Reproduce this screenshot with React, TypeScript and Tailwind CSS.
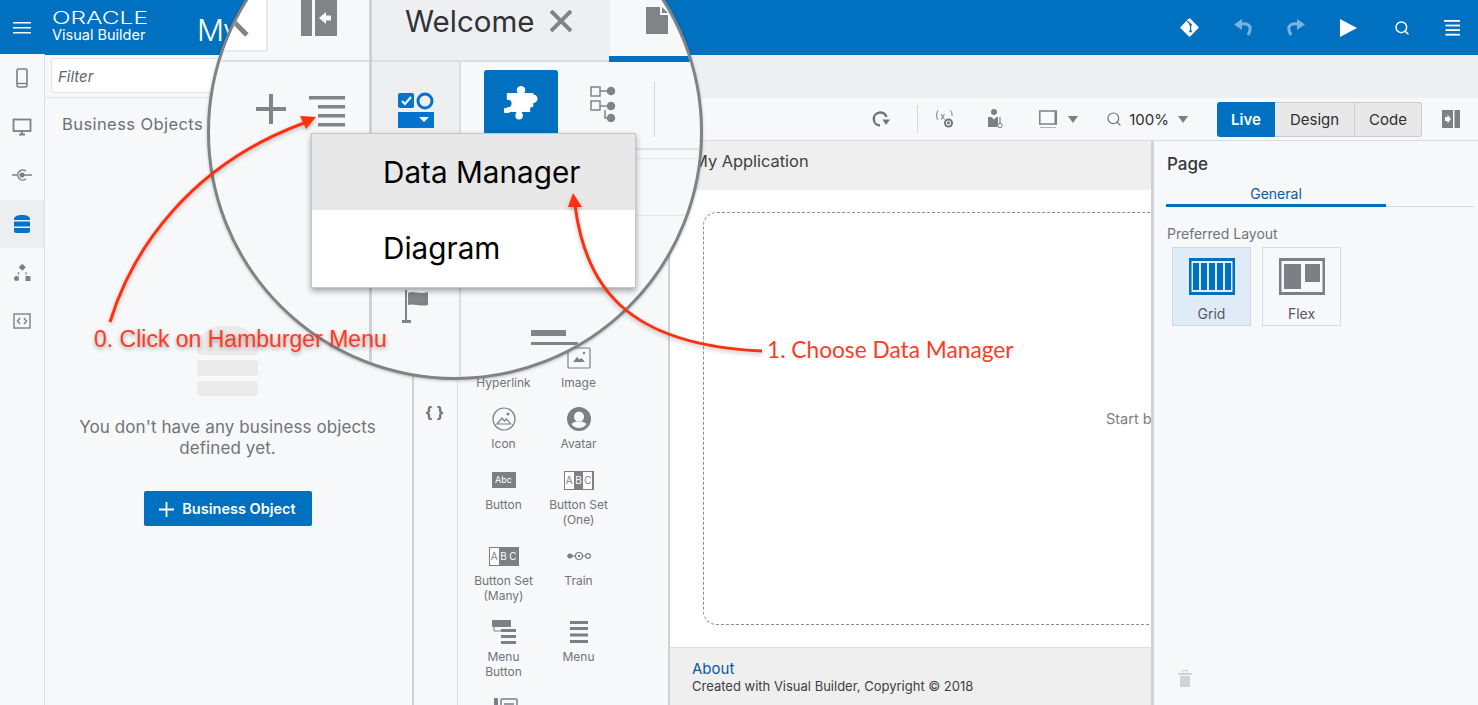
import { Search } from "lucide-react"
import type { ReactNode } from "react"

function RailIcon({ active, children }: { active?: boolean; children: ReactNode }) {
  return (
    <div className={`h-[48.6px] flex items-center justify-center text-[#7b8085] ${active ? "bg-[#eceef0]" : ""}`}>
      {children}
    </div>
  )
}

function SideRail() {
  return (
    <div className="w-[45px] shrink-0 border-r border-[#d6e0ea] bg-[#f7f8fa] -mt-px">
      <RailIcon>
        <svg width="12" height="20" viewBox="0 0 12 20" fill="none" stroke="currentColor" strokeWidth="1.6">
          <rect x="1" y="1" width="10" height="18" rx="1.5" />
          <path d="M1 15.5h10" strokeWidth="1.4" />
        </svg>
      </RailIcon>
      <RailIcon>
        <svg width="20" height="18" viewBox="0 0 20 18" fill="none" stroke="currentColor" strokeWidth="1.8">
          <rect x="1.5" y="1.5" width="17" height="11.5" />
          <path d="M7 16.5h6M10 13v3" />
        </svg>
      </RailIcon>
      <RailIcon>
        <svg width="20" height="14" viewBox="0 0 20 14" fill="none" stroke="currentColor" strokeWidth="1.5">
          <path d="M14 3.2A5 5 0 1 0 14 10.8" />
          <circle cx="10" cy="7" r="1.8" fill="currentColor" />
          <path d="M0 7h5M11 7h9" />
        </svg>
      </RailIcon>
      <RailIcon active>
        <svg width="16" height="18" viewBox="0 0 16 18" fill="#0572ce">
          <path d="M0 4c0-2.5 3.5-4 8-4s8 1.500 8 4v1H0z" />
          <rect x="0" y="6.500" width="16" height="5" />
          <path d="M0 13h16v3c0 1-1 2-2 2H2c-1 0-2-1-2-2z" />
        </svg>
      </RailIcon>
      <RailIcon>
        <svg width="17" height="18" viewBox="0 0 17 18" fill="currentColor">
          <rect x="5.800" y="0.800" width="5" height="5" transform="rotate(45 8.300 3.300)" />
          <circle cx="2.500" cy="14.500" r="2.500" />
          <rect x="11.500" y="12" width="5" height="5" />
          <path d="M5 8.500 3.500 11M11.500 8.500 13 11" stroke="currentColor" strokeWidth="1.500" strokeDasharray="1.500 1" />
        </svg>
      </RailIcon>
      <RailIcon>
        <svg width="18" height="16" viewBox="0 0 18 16" fill="none" stroke="currentColor" strokeWidth="1.400">
          <rect x="1" y="1" width="16" height="14" />
          <path d="M7 5 4.500 8 7 11M11 5l2.500 3L11 11" />
        </svg>
      </RailIcon>
    </div>
  )
}

function BusinessPanel() {
  return (
    <div className="w-[367px] shrink-0 bg-[#f7f8fa] flex flex-col">
      <div className="h-[43px] shrink-0 border-b border-[#dfe3e7] pl-[6px] pt-[3px]">
        <div className="h-[35px] w-[300px] bg-white border border-[#dfe3e7] rounded-[3px] flex items-center pl-[6px] pt-[3px] text-[15px] italic text-[#5c6670]">
          Filter
        </div>
      </div>
      <div className="h-[52px] shrink-0 flex items-center pl-[17px] text-[16.500px] tracking-[0.42px] text-[#6a7077]">
        Business Objects
      </div>
      <div className="flex flex-col items-center pr-[2px]">
        <div className="mt-[176px] w-[61px] flex flex-col gap-[5px]">
          <div className="h-[29px] bg-[#ebebeb] rounded-t-[24px] rounded-b-[4px]" />
          <div className="h-[16px] bg-[#ebebeb] rounded-[4px]" />
          <div className="h-[15px] bg-[#ebebeb] rounded-[4px]" />
        </div>
        <p className="mt-[21px] text-[17px] leading-[21px] text-[#6f7479] text-center tracking-[0.1px]">
          You don't have any business objects
          <br />
          defined yet.
        </p>
        <button className="mt-[32px] h-[35px] w-[168px] bg-[#0070c0] rounded-[2px] pt-[1px] text-white text-[14.500px] font-semibold flex items-center justify-center gap-[8px]">
          <svg width="15" height="15" viewBox="0 0 15 15" stroke="white" strokeWidth="1.800">
            <path d="M7.500 0v15M0 7.500h15" />
          </svg>
          Business Object
        </button>
      </div>
    </div>
  )
}

function ToolDivider() {
  return <div className="w-px h-[28px] bg-[#d5d8db]" />
}

function Caret() {
  return (
    <svg width="10" height="7" viewBox="0 0 10 7" fill="#7b8085">
      <path d="M0 0h10L5 7z" />
    </svg>
  )
}

function Toolbar() {
  return (
    <div className="h-[43px] shrink-0 border-b border-[#d3dde6] bg-[#f7f8fa] flex items-center justify-end text-[#6f7479]">
      <svg width="18" height="18" viewBox="0 0 18 18" fill="none" stroke="currentColor" strokeWidth="2.400">
        <path d="M14.500 7A6.500 6.500 0 1 0 8 15.500" />
        <path d="M10.500 9.500h7.500L14 15z" fill="currentColor" stroke="none" />
      </svg>
      <div className="ml-[27px]">
        <ToolDivider />
      </div>
      <svg className="ml-[17px]" width="20" height="20" viewBox="0 0 20 20" fill="none" stroke="#8a8e92" strokeWidth="1.100">
        <path d="M3 1.500C1 5 1 8 3 11M15.500 1.500c1.500 2 1.800 3.500 1.500 5.500" />
        <path d="M6 5l3.500 5.500M9.500 5 6 10.500" />
        <circle cx="13.500" cy="14" r="4.500" fill="#6f7479" stroke="none" />
        <circle cx="13.500" cy="14" r="2" fill="none" stroke="#f7f8fa" />
      </svg>
      <svg className="ml-[33px]" width="16" height="20" viewBox="0 0 16 20" fill="#7b8085">
        <circle cx="6" cy="3" r="3" />
        <path d="M0 8h3.500L6 10.500 8.500 8H10v10H0z" />
        <path d="M12 8v6" stroke="#7b8085" strokeWidth="1.200" />
        <circle cx="12" cy="16.500" r="2.200" fill="#f7f8fa" stroke="#7b8085" />
      </svg>
      <svg className="ml-[35px]" width="18" height="20" viewBox="0 0 18 20" fill="none" stroke="#7b8085">
        <rect x="0.800" y="2" width="16.400" height="13" strokeWidth="1.500" fill="#fafbfc" />
        <path d="M16.500 2v13" strokeWidth="2" />
        <path d="M1 18.500h16" stroke="#b0b3b6" />
      </svg>
      <div className="ml-[11px]">
        <Caret />
      </div>
      <Search className="ml-[28px]" size={16} strokeWidth={1.800} />
      <span className="ml-[7px] pt-[2px] text-[15px] text-[#2c2f33]">100%</span>
      <div className="ml-[9px]">
        <Caret />
      </div>
      <div className="ml-[29px] flex h-[35px] rounded-[3px] text-[15px]">
        <div className="w-[58px] pt-[2px] bg-[#0070c0] text-white font-semibold rounded-l-[3px] flex items-center justify-center">
          Live
        </div>
        <div className="w-[80px] pt-[2px] bg-[#e8e8e8] border-y border-r border-[#c9cdd1] text-[#2c2f33] flex items-center justify-center">
          Design
        </div>
        <div className="w-[67px] pt-[2px] bg-[#e8e8e8] border-y border-r border-[#c9cdd1] text-[#2c2f33] rounded-r-[3px] flex items-center justify-center">
          Code
        </div>
      </div>
      <svg className="ml-[20px] mr-[18px]" width="18" height="18" viewBox="0 0 18 18" fill="#7b8085">
        <rect x="0" y="0" width="11" height="18" />
        <rect x="12.500" y="0" width="5.500" height="18" />
        <path d="M3 7h2.500V4.500L9 9l-3.500 4.500V11H3z" fill="#f7f8fa" />
      </svg>
    </div>
  )
}

function PaletteItem({ label, children }: { label: ReactNode; children?: ReactNode }) {
  return (
    <div className="flex flex-col items-center">
      <div className="h-[30px] flex items-center justify-center text-[#7b8085]">{children}</div>
      <div className="mt-[2px] text-[12px] leading-[15px] text-[#6f7479] text-center">{label}</div>
    </div>
  )
}

function Palette() {
  return (
    <div className="w-[212px] shrink-0 bg-[#f7f8fa] border-r-2 border-[#cdd2d7] overflow-hidden pt-[202px]">
      <div className="grid grid-cols-[75px_75px] pl-[8px] gap-y-[14px]">
        <PaletteItem label="Hyperlink" />
        <PaletteItem label="Image">
          <svg width="24" height="22" viewBox="0 0 24 22" fill="none" stroke="currentColor" strokeWidth="1.200">
            <rect x="1" y="1" width="22" height="20" rx="1" />
            <path d="M6 15l4-5 2.500 2.500 2-1.500 3.500 4z" fill="currentColor" stroke="none" />
            <circle cx="17" cy="6" r="1.200" fill="currentColor" stroke="none" />
          </svg>
        </PaletteItem>
        <PaletteItem label="Icon">
          <svg width="24" height="24" viewBox="0 0 24 24" fill="none" stroke="currentColor" strokeWidth="1.200">
            <circle cx="12" cy="12" r="11" />
            <path d="M5 17l5-6 2.500 3 2-2 4 5z" />
            <circle cx="16" cy="7" r="1.500" fill="currentColor" stroke="none" />
          </svg>
        </PaletteItem>
        <PaletteItem label="Avatar">
          <svg width="24" height="24" viewBox="0 0 24 24" fill="currentColor">
            <path d="M12 0a12 12 0 1 0 0 24 12 12 0 0 0 0-24zm0 4.500a5 5 0 0 1 5 5.500 5 5 0 0 1-10 0 5 5 0 0 1 5-5.500zM12 21c-3 0-6-1.500-7.500-4 2-2 4.500-2.500 7.500-2.500s5.500.5 7.500 2.500C18 19.500 15 21 12 21z" />
          </svg>
        </PaletteItem>
        <PaletteItem label="Button">
          <div className="w-[24px] h-[16px] bg-[#7b8085] text-white text-[9px] leading-[16px] text-center">Abc</div>
        </PaletteItem>
        <PaletteItem
          label={
            <>
              Button Set
              <br />
              (One)
            </>
          }
        >
          <div className="w-[30px] h-[19px] bg-[#7b8085] p-px flex text-[10px] leading-[17px] text-center">
            <span className="flex-1 bg-white text-[#7b8085]">A</span>
            <span className="flex-1 text-white">B</span>
            <span className="flex-1 bg-white text-[#7b8085]">C</span>
          </div>
        </PaletteItem>
        <PaletteItem
          label={
            <>
              Button Set
              <br />
              (Many)
            </>
          }
        >
          <div className="w-[30px] h-[19px] bg-[#7b8085] p-px flex text-[10px] leading-[17px] text-center">
            <span className="flex-1 bg-white text-[#7b8085]">A</span>
            <span className="flex-1 text-white">B</span>
            <span className="flex-1 text-white">C</span>
          </div>
        </PaletteItem>
        <PaletteItem label="Train">
          <svg width="24" height="10" viewBox="0 0 24 10" fill="none" stroke="currentColor" strokeWidth="1.200">
            <path d="M0 5h24" />
            <circle cx="3" cy="5" r="2.500" fill="currentColor" stroke="none" />
            <circle cx="12" cy="5" r="3.500" fill="#f7f8fa" />
            <circle cx="12" cy="5" r="1.200" fill="currentColor" stroke="none" />
            <circle cx="21" cy="5" r="2.300" fill="#f7f8fa" />
          </svg>
        </PaletteItem>
        <PaletteItem
          label={
            <>
              Menu
              <br />
              Button
            </>
          }
        >
          <svg width="24" height="24" viewBox="0 0 24 24" fill="currentColor">
            <rect x="0" y="0" width="19" height="7" rx="1" />
            <path d="M2 7v4h7" fill="none" stroke="currentColor" />
            <rect x="9" y="9" width="15" height="3" />
            <rect x="9" y="15" width="15" height="3" />
            <rect x="9" y="21" width="15" height="3" />
          </svg>
        </PaletteItem>
        <PaletteItem label="Menu">
          <svg width="18" height="22" viewBox="0 0 18 22" fill="currentColor">
            <rect x="0" y="0" width="18" height="3" />
            <rect x="0" y="6" width="18" height="3" />
            <rect x="0" y="12.500" width="18" height="3" />
            <rect x="0" y="19" width="18" height="3" />
          </svg>
        </PaletteItem>
        <div className="pl-[28px] pt-[5px] text-[#7b8085]">
          <svg width="24" height="20" viewBox="0 0 24 20" fill="none" stroke="currentColor" strokeWidth="1.500">
            <rect x="0" y="0" width="4" height="20" fill="currentColor" stroke="none" />
            <rect x="7" y="1" width="16" height="18" rx="1" />
            <path d="M10 6h10M10 10h10" />
          </svg>
        </div>
      </div>
    </div>
  )
}

function Canvas() {
  return (
    <div className="flex-1 min-w-0 bg-white flex flex-col overflow-hidden">
      <div className="h-[47px] shrink-0 bg-[#efefef] shadow-[0_1px_3px_rgba(0,0,0,0.12)] flex items-center pl-[23px] pb-[6px] text-[16.400px] text-[#3c4045]">
        My Application
      </div>
      <div className="flex-1 pl-[33px] pt-[24px]">
        <div className="w-[620px] h-[413px] border border-dashed border-[#8a8d90] rounded-[14px] flex items-center pl-[402px] text-[14.500px] text-[#7b8085]">
          Start by
        </div>
      </div>
      <div className="h-[58px] shrink-0 bg-[#efefef] border-t border-[#e0e0e0] pl-[22px] pt-[12px]">
        <div className="text-[15px] leading-[17px] text-[#0b5aa0]">About</div>
        <div className="text-[13px] leading-[18px] text-[#3c4045]">
          Created with Visual Builder, Copyright © 2018
        </div>
      </div>
    </div>
  )
}

function PropsPanel() {
  return (
    <div className="w-[327px] shrink-0 bg-[#f7f8fa] border-l-[3px] border-[#cdd2d7] flex flex-col pl-[13px]">
      <div className="mt-[11px] text-[17px] leading-[24px] font-medium text-[#33373b]">Page</div>
      <div className="mt-[7px] -ml-px w-[308px] border-b border-[#d3dde6]">
        <div className="w-[220px] h-[24px] pt-[1px] -mb-px border-b-[3px] border-[#0070c0] text-center text-[14px] leading-[20px] text-[#0b5aa0]">
          General
        </div>
      </div>
      <div className="mt-[17px] text-[14px] leading-[20px] text-[#6f7479]">Preferred Layout</div>
      <div className="mt-[3px] ml-[5px] flex gap-[11px] text-[14px] text-[#55595e]">
        <div className="w-[79px] h-[79px] bg-[#dfecf7] border border-[#c8d9e8] flex flex-col items-center pt-[10px]">
          <svg width="46" height="37" viewBox="0 0 46 37" fill="#0070c0">
            <path fillRule="evenodd" d="M0 0h46v37H0zM2.500 3v31h41V3z" />
            <rect x="4" y="5" width="6" height="27" />
            <rect x="12" y="5" width="6" height="27" />
            <rect x="20" y="5" width="6" height="27" />
            <rect x="28" y="5" width="6" height="27" />
            <rect x="36" y="5" width="6" height="27" />
          </svg>
          <span className="mt-[10px] leading-[18px]">Grid</span>
        </div>
        <div className="w-[79px] h-[79px] border border-[#d3dde6] flex flex-col items-center pt-[10px]">
          <svg width="46" height="37" viewBox="0 0 46 37" fill="#7b8085">
            <path fillRule="evenodd" d="M0 0h46v37H0zM2.500 3v31h41V3z" />
            <rect x="5" y="6" width="17" height="25" />
            <rect x="26" y="6" width="15" height="18" />
          </svg>
          <span className="mt-[10px] leading-[18px]">Flex</span>
        </div>
      </div>
      <div className="mt-auto mb-[18px] ml-[11px]">
        <svg width="14" height="17" viewBox="0 0 14 17" fill="#d0d2d4">
          <path d="M0 3h4V0h6v3h4v2H0zM5 1v2h4V1z" fillRule="evenodd" />
          <rect x="2" y="6" width="10" height="11" />
        </svg>
      </div>
    </div>
  )
}

function TopBar() {
  return (
    <header className="h-[55px] shrink-0 bg-[#0070c0] flex items-center text-white">
      <div className="w-[52px] pl-[13px]">
        <svg width="19" height="14" viewBox="0 0 19 14" fill="white">
          <rect y="1" width="18" height="1.500" />
          <rect y="6" width="18" height="1.500" />
          <rect y="11" width="18" height="1.500" />
        </svg>
      </div>
      <div className="w-[145px] flex flex-col">
        <svg width="100" height="15" className="-mt-[2px]">
          <text
            x="0"
            y="13"
            fill="white"
            fontSize="17"
            fontFamily="Inter"
            fontWeight="300"
            textLength="96"
            lengthAdjust="spacingAndGlyphs"
          >
            ORACLE
          </text>
        </svg>
        <span className="text-[14.500px] leading-[17px] font-normal">Visual Builder</span>
      </div>
      <span className="mt-[6px] text-[30px] font-light tracking-[-1px]">My</span>
      <div className="ml-auto mr-[3px] flex items-center">
        <div className="w-[53px] flex justify-center">
          <svg width="19" height="19" viewBox="0 0 18 18">
            <rect x="2.500" y="2.500" width="13" height="13" rx="1.500" transform="rotate(45 9 9)" fill="white" />
            <path d="M7 3l3 3v7" stroke="#0070c0" strokeWidth="1.200" fill="none" />
            <circle cx="10" cy="6.500" r="1.200" fill="#0070c0" />
            <circle cx="10" cy="12.500" r="1.200" fill="#0070c0" />
          </svg>
        </div>
        <div className="w-[53px] flex justify-center">
          <svg width="18" height="18" viewBox="0 0 18 18" fill="none" stroke="#78b3e0" strokeWidth="3">
            <path d="M7 5c6-1 10 1 9 6-.3 2-1 3-2 5" />
            <path d="M0 5.500 8 0v11z" fill="#78b3e0" stroke="none" />
          </svg>
        </div>
        <div className="w-[53px] flex justify-center">
          <svg width="18" height="18" viewBox="0 0 18 18" fill="none" stroke="#78b3e0" strokeWidth="3">
            <path d="M11 5C5 4 1 6 2 11c.3 2 1 3 2 5" />
            <path d="M18 5.500 10 0v11z" fill="#78b3e0" stroke="none" />
          </svg>
        </div>
        <div className="w-[53px] flex justify-center">
          <svg width="17" height="18" viewBox="0 0 17 18" fill="white">
            <path d="M0 0l17 9-17 9z" />
          </svg>
        </div>
        <div className="w-[53px] flex justify-center">
          <Search size={16} strokeWidth={2.200} />
        </div>
        <div className="w-[47px] flex justify-center">
          <svg width="16" height="16" viewBox="0 0 16 16" fill="white">
            <rect x="0" y="0" width="16" height="1.800" />
            <rect x="1.500" y="4.600" width="14.500" height="1.800" />
            <rect x="1.500" y="9.200" width="14.500" height="1.800" />
            <rect x="1.500" y="13.800" width="14.500" height="1.800" />
          </svg>
        </div>
      </div>
    </header>
  )
}

function Magnifier() {
  return (
    <div className="absolute left-[207px] top-[-116px] w-[496px] h-[496px] rounded-full border-[3px] border-[#808385] bg-[#f7f8fa] overflow-hidden shadow-[0_1px_3px_rgba(0,0,0,0.25)]">
      <div className="relative w-full h-full flex pt-[113px]">
        <div className="w-[159px] shrink-0">
          <div className="h-[62px] border-b-2 border-[#d6e0ea] relative flex">
            <div className="w-[58px] h-[52px] bg-white border-r-2 border-b-2 border-[#e6e8ea] rounded-br-[3px] flex items-start justify-end">
              <div className="w-[21px] h-[5px] bg-[#808487] rotate-45 mt-[25px] mr-[16px]" />
            </div>
            <svg className="ml-[33px]" width="36" height="36" viewBox="0 0 36 36" fill="#808487">
              <rect x="0" y="0" width="11" height="36" />
              <rect x="14" y="0" width="22" height="36" />
              <path d="M18 18l7-6v3.500h5v5h-5V24z" fill="#f7f8fa" />
            </svg>
          </div>
          <div className="flex pt-[31px] pl-[45px] text-[#808487]">
            <svg width="32" height="32" viewBox="0 0 32 32" fill="currentColor">
              <rect x="14" y="1" width="4" height="30" />
              <rect x="1" y="14" width="30" height="4" />
            </svg>
            <svg className="ml-[22px] mt-[3px]" width="36" height="31" viewBox="0 0 36 31" fill="currentColor">
              <rect x="0" y="0" width="36" height="3.500" />
              <rect x="9" y="9" width="27" height="3.500" />
              <rect x="9" y="18" width="27" height="3.500" />
              <rect x="9" y="27" width="27" height="3.500" />
            </svg>
          </div>
        </div>
        <div className="w-[3px] shrink-0 bg-[#cdd2d7]" />
        <div className="w-[87px] shrink-0">
          <div className="h-[62px] w-[238px] bg-[#eeeff0] border-b-2 border-[#d6e0ea] flex items-center pl-[33px] pb-[18px] text-[29.500px] text-[#2f3337] whitespace-nowrap">
            Welcome
            <svg className="ml-[15px]" width="22" height="22" viewBox="0 0 22 22" stroke="#808487" strokeWidth="4">
              <path d="M1 1l20 20M21 1 1 21" />
            </svg>
          </div>
          <div className="h-[73px] bg-[#eeeff0] flex items-center justify-center pt-[22px]">
            <svg width="36" height="36" viewBox="0 0 36 36">
              <rect x="0" y="1" width="16" height="15" rx="2" fill="#0572ce" />
              <path d="M4 9l3 3 6-7" stroke="white" strokeWidth="2" fill="none" />
              <circle cx="27" cy="9" r="7" fill="none" stroke="#0572ce" strokeWidth="3" />
              <rect x="0" y="20" width="36" height="16" fill="#0572ce" />
              <path d="M21 25h10l-5 5z" fill="white" />
            </svg>
          </div>
          <div className="pt-[155px] pl-[30px]">
            <svg width="28" height="34" viewBox="0 0 28 34" fill="#808487">
              <rect x="3" y="0" width="2" height="30" />
              <rect x="0" y="30" width="9" height="3" />
              <path d="M6 3c6-3 10 2 20-1v13c-8 2-14-2-20 0z" />
            </svg>
          </div>
        </div>
        <div className="w-[2px] shrink-0 bg-[#d6e0ea] mt-[62px]" />
        <div className="flex-1 min-w-0">
          <div className="h-[62px] flex justify-end">
            <div className="w-[94px] h-[62px] border-b-[6px] border-[#0070c0] pl-[37px] pt-[7px] -mr-[3px]">
              <svg width="22" height="27" viewBox="0 0 22 27" fill="#808487">
                <path d="M0 0h14v8h8v19H0zM16 0l6 6h-6z" />
              </svg>
            </div>
          </div>
          <div className="flex items-start pl-[23px] pt-[8px]">
            <div className="w-[74px] h-[65px] bg-[#0070c0] rounded-t-[3px] flex items-center justify-center">
              <svg width="34" height="35" viewBox="0 0 36 36" fill="white">
                <rect x="3" y="8" width="28" height="20" />
                <circle cx="18" cy="5" r="4.500" />
                <rect x="15" y="7" width="6" height="3" />
                <circle cx="31" cy="14" r="4.500" />
                <circle cx="16" cy="32" r="4" />
                <rect x="13" y="27" width="6" height="3" />
                <circle cx="4" cy="19" r="4" fill="#0070c0" />
                <circle cx="31" cy="26" r="3.500" fill="#0070c0" />
                <rect x="0" y="24" width="6" height="5" />
              </svg>
            </div>
            <svg className="ml-[32px] mt-[16px]" width="26" height="36" viewBox="0 0 26 36" fill="none" stroke="#808487" strokeWidth="1.500">
              <rect x="1" y="1" width="9" height="9" />
              <rect x="1" y="15" width="9" height="9" />
              <circle cx="21" cy="5" r="3.500" fill="#808487" />
              <circle cx="21" cy="20" r="3.500" fill="#808487" />
              <circle cx="21" cy="32" r="3.500" fill="#808487" />
              <path d="M10 5h7M10 20h7M15 24v8h3" />
            </svg>
            <div className="ml-[38px] mt-[12px] w-px h-[55px] bg-[#d5d8db]" />
          </div>
          <div className="mt-[193px] ml-[70px] w-[35px] h-[6px] bg-[#808487]" />
          <div className="mt-[6px] ml-[70px] w-[47px] h-[3px] bg-[#808487]" />
        </div>
        <div className="absolute left-[426px] top-[261px] w-[70px] h-[2px] bg-[#dce3ea]" />
        <div className="absolute left-[426px] top-[271px] w-[70px] h-px bg-[#e2e6ea]" />
        <div className="absolute left-[426px] top-[328px] w-[70px] h-px bg-[#e2e6ea]" />
        <div className="absolute left-[101px] top-[246px] w-[325px] bg-white border border-[#c4c6c8] shadow-[0_3px_6px_rgba(0,0,0,0.35)] text-[29.700px] text-black">
          <div className="h-[76px] bg-[#e8e8e8] flex items-center pl-[71px]">Data Manager</div>
          <div className="h-[77px] flex items-center pl-[71px]">Diagram</div>
        </div>
      </div>
    </div>
  )
}

function Annotations() {
  return (
    <>
      <svg className="absolute left-0 top-0 pointer-events-none drop-shadow-[0_2px_2px_rgba(0,0,0,0.25)]" width="1478" height="705">
        <path d="M110 322C132 250 190 165 304 123" fill="none" stroke="#ff3010" strokeWidth="3" />
        <path d="M316 117 300 116 306 129z" fill="#ff3010" />
        <path d="M575 205C585 285 625 345 762 351" fill="none" stroke="#ff3010" strokeWidth="3" />
        <path d="M573 193 568 207 582 207z" fill="#ff3010" />
      </svg>
      <div className="absolute left-[94px] top-[325px] text-[23px] leading-[28px] whitespace-nowrap text-[#ff3b1f] [text-shadow:0_2px_4px_rgba(0,0,0,0.35)] font-['Liberation_Sans',sans-serif]">
        0. Click on Hamburger Menu
      </div>
      <div className="absolute left-[767px] top-[336px] text-[22.700px] leading-[28px] whitespace-nowrap text-[#ff3b1f] font-['Lato',sans-serif]">
        1. Choose Data Manager
      </div>
    </>
  )
}

export default function App() {
  return (
    <div className="relative w-[1478px] h-[705px] overflow-hidden bg-[#f7f8fa] flex flex-col font-['Inter',sans-serif]">
      <TopBar />
      <div className="flex-1 min-h-0 flex">
        <SideRail />
        <BusinessPanel />
        <div className="flex-1 min-w-0 flex flex-col">
          <div className="h-[43px] shrink-0 bg-[#eeeff0]" />
          <div className="flex-1 min-h-0 flex">
            <div className="w-[46px] shrink-0 border-l-2 border-r border-l-[#cdd2d7] border-r-[#d6e0ea] bg-[#f7f8fa] pt-[302px] pr-[2px] text-center text-[16px] font-bold text-[#6f7479]">
              {"{ }"}
            </div>
            <div className="flex-1 min-w-0 flex flex-col">
              <Toolbar />
              <div className="flex-1 min-h-0 flex">
                <Palette />
                <Canvas />
                <PropsPanel />
              </div>
            </div>
          </div>
        </div>
      </div>
      <Magnifier />
      <Annotations />
    </div>
  )
}
